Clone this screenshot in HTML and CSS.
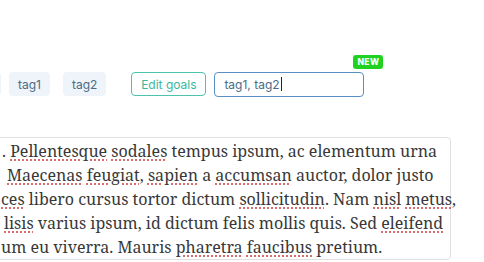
FILE: index.html
```html
<!DOCTYPE html>
<html>
<head>
<meta charset="utf-8">
<link rel="stylesheet" href="styles.css">
</head>
<body>
<div class="page">
  <div class="toolbar">
    <span class="tag tag-cut"></span>
    <span class="tag">tag1</span>
    <span class="tag">tag2</span>
    <button class="btn-goals">Edit goals</button>
    <div class="field">
      <div class="input">tag1, tag2<span class="caret"></span></div>
      <span class="badge">NEW</span>
    </div>
  </div>
  <div class="editor">
    <div class="line l1">. <span class="sp">Pellentesque</span> <span class="sp">sodales</span> tempus ipsum, ac elementum urna</div>
    <div class="line l2"><span class="sp">Maecenas</span> <span class="sp">feugiat</span>, <span class="sp">sapien</span> a <span class="sp">accumsan</span> auctor, dolor justo</div>
    <div class="line l3"><span class="sp">ces</span> libero cursus tortor dictum <span class="sp">sollicitudin</span>. Nam <span class="sp">nisl</span> <span class="sp">metus</span>,</div>
    <div class="line l4"><span class="sp">lisis</span> varius ipsum, id dictum felis mollis quis. Sed <span class="sp">eleifend</span></div>
    <div class="line l5">um eu viverra. Mauris <span class="sp">pharetra</span> <span class="sp">faucibus</span> pretium.</div>
  </div>
</div>
</body>
</html>
```
FILE: styles.css
```css
html, body {
  margin: 0;
  padding: 0;
  background: #ffffff;
  overflow: hidden;
}
.page {
  width: 484px;
  height: 262px;
  overflow: hidden;
}
.toolbar {
  display: flex;
  align-items: center;
  margin-top: 71px;
  margin-left: -40px;
  height: 26px;
  font-family: Inter, "Noto Sans", sans-serif;
}
.tag {
  display: inline-flex;
  align-items: center;
  justify-content: center;
  height: 24px;
  box-sizing: border-box;
  padding: 0 9px;
  border-radius: 4px;
  background: #eef4fa;
  color: #4b6b88;
  font-size: 12px;
  margin-right: 13px;
}
.tag-cut {
  width: 41px;
  margin-right: 8px;
}
.btn-goals {
  margin-left: 12px;
  height: 24px;
  width: 75px;
  box-sizing: border-box;
  padding: 0;
  border: 1px solid #4cc3ad;
  border-radius: 4px;
  background: #ffffff;
  color: #3bb8a0;
  font-family: Inter, "Noto Sans", sans-serif;
  font-size: 12px;
}
.field {
  position: relative;
  margin-left: 8px;
}
.input {
  display: flex;
  align-items: center;
  width: 150px;
  height: 25px;
  box-sizing: border-box;
  padding-left: 9px;
  border: 1px solid #5a8fc4;
  border-radius: 4px;
  color: #4b6b88;
  font-size: 12px;
}
.caret {
  display: inline-block;
  width: 1px;
  height: 14px;
  background: #222;
  margin-left: 1px;
}
.badge {
  position: absolute;
  top: -17px;
  right: -19px;
  width: 30px;
  height: 14px;
  border-radius: 3px;
  background: #1fd21f;
  color: #ffffff;
  font-size: 8.5px;
  font-weight: 800;
  letter-spacing: 0.4px;
  display: flex;
  align-items: center;
  justify-content: center;
}
.editor {
  margin-top: 40px;
  margin-left: -20px;
  width: 471px;
  box-sizing: border-box;
  border: 1px solid #e0e0e0;
  border-radius: 4px;
  padding: 1px 0 0 20px;
  font-family: "Noto Serif", "DejaVu Serif", serif;
  font-size: 16px;
  line-height: 24px;
  color: #383838;
}
.line {
  white-space: nowrap;
}
.l1 { padding-left: 1px; }
.l2 { padding-left: 6px; }
.l3 { padding-left: 0; }
.l4 { padding-left: 3px; }
.l5 { padding-left: 0; }
.sp {
  text-decoration: underline dotted #d04a4a;
  text-underline-offset: 3px;
}
```
